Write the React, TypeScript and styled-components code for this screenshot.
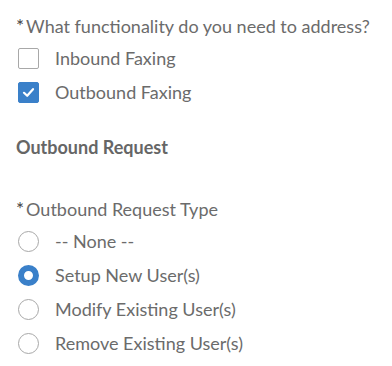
import styled, { createGlobalStyle } from 'styled-components';

const GlobalStyle = createGlobalStyle`
  body {
    margin: 0;
    background: #ffffff;
    font-family: Lato, "Liberation Sans", sans-serif;
    color: #6b6b6b;
  }
`;

const Page = styled.div`
  padding: 14px 0 0 16px;
  width: 392px;
  height: 366px;
  box-sizing: border-box;
`;

const FieldLabel = styled.div`
  display: flex;
  align-items: flex-start;
  font-size: 18px;
  line-height: 24px;
  color: #6b6b6b;
`;

const Required = styled.span`
  font-size: 19px;
  font-weight: 400;
  line-height: 19px;
  color: #444;
  margin-right: 2px;
  margin-top: 2px;
`;

const OptionList = styled.div`
  display: flex;
  flex-direction: column;
  gap: 13px;
  margin-top: 10px;
  padding-left: 2px;
`;

const Option = styled.label`
  display: flex;
  align-items: center;
  gap: 16px;
  font-size: 18px;
  line-height: 21px;
  color: #6b6b6b;
`;

const Box = styled.span<{ $checked?: boolean }>`
  width: 21px;
  height: 21px;
  box-sizing: border-box;
  border-radius: 2px;
  border: 1px solid ${(p) => (p.$checked ? '#3a80c9' : '#a8a8a8')};
  background: ${(p) => (p.$checked ? '#3a80c9' : '#fff')};
  display: flex;
  align-items: center;
  justify-content: center;
  flex-shrink: 0;
`;

const Radio = styled.span<{ $checked?: boolean }>`
  width: 21px;
  height: 21px;
  box-sizing: border-box;
  border-radius: 50%;
  border: ${(p) => (p.$checked ? '6px solid #3a80c9' : '1px solid #a8a8a8')};
  background: #fff;
  flex-shrink: 0;
`;

const SectionTitle = styled.div`
  font-weight: 700;
  font-size: 18px;
  line-height: 22px;
  color: #666;
  margin: 33px 0 39px;
`;

const Check = () => (
  <svg width="13" height="13" viewBox="0 0 13 13">
    <path d="M2 6.8 L5.2 9.8 L11 3.2" fill="none" stroke="#fff" strokeWidth="2.2" strokeLinecap="round" strokeLinejoin="round" />
  </svg>
);

export default function App() {
  return (
    <Page>
      <GlobalStyle />
      <FieldLabel>
        <Required>*</Required>What functionality do you need to address?
      </FieldLabel>
      <OptionList>
        <Option>
          <Box />
          Inbound Faxing
        </Option>
        <Option>
          <Box $checked>
            <Check />
          </Box>
          Outbound Faxing
        </Option>
      </OptionList>
      <SectionTitle>Outbound Request</SectionTitle>
      <FieldLabel>
        <Required>*</Required>Outbound Request Type
      </FieldLabel>
      <OptionList>
        <Option>
          <Radio />
          -- None --
        </Option>
        <Option>
          <Radio $checked />
          Setup New User(s)
        </Option>
        <Option>
          <Radio />
          Modify Existing User(s)
        </Option>
        <Option>
          <Radio />
          Remove Existing User(s)
        </Option>
      </OptionList>
    </Page>
  );
}
